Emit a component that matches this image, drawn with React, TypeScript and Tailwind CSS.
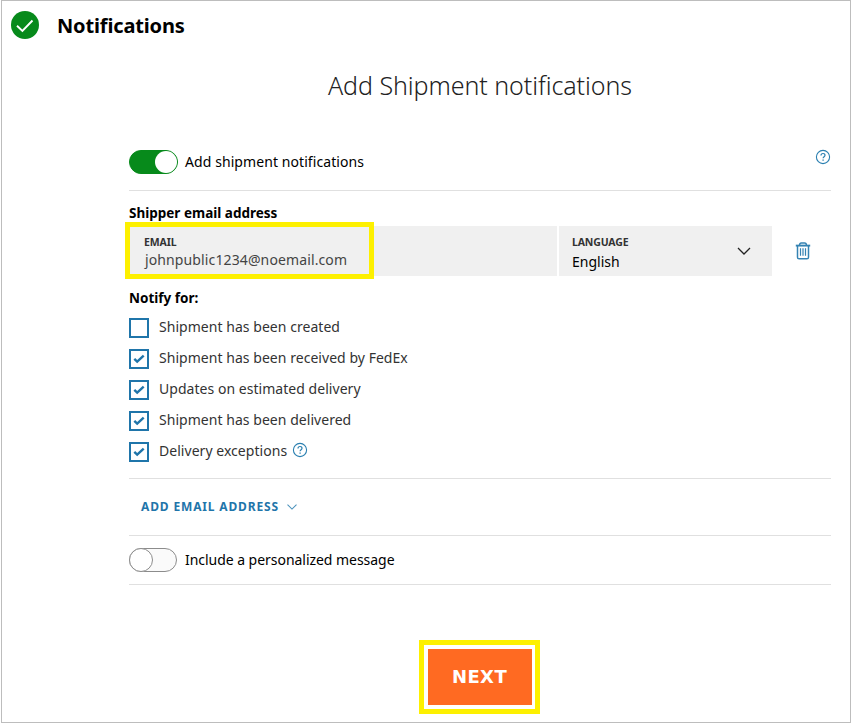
import * as React from "react"
import { clsx } from "clsx"

type NotifyOption = {
  id: string
  label: string
  checked: boolean
  help?: boolean
}

const initialOptions: NotifyOption[] = [
  { id: "created", label: "Shipment has been created", checked: false },
  { id: "received", label: "Shipment has been received by FedEx", checked: true },
  { id: "estimated", label: "Updates on estimated delivery", checked: true },
  { id: "delivered", label: "Shipment has been delivered", checked: true },
  { id: "exceptions", label: "Delivery exceptions", checked: true, help: true },
]

function HelpIcon() {
  return (
    <svg width="16" height="16" viewBox="0 0 16 16" fill="none" stroke="#2a7fb0" className="shrink-0">
      <circle cx="8" cy="8" r="6.6" strokeWidth="1.1" />
      <path d="M6 6.4C6 5.2 6.9 4.5 8 4.5s2 .7 2 1.8c0 1.3-1.9 1.5-1.9 3" strokeWidth="1.2" />
      <path d="M8.1 10.4v1.3" strokeWidth="1.3" />
    </svg>
  )
}

function TrashIcon() {
  return (
    <svg width="16" height="18" viewBox="0 0 16 18" fill="none" stroke="#3583b3" className="shrink-0">
      <path d="M.8 3.6h14.4" strokeWidth="1.9" />
      <path d="M4.6 3.2C4.6 1.6 5.2 1 6.4 1h3.2c1.2 0 1.8.6 1.8 2.2" strokeWidth="1.5" />
      <path d="M2.5 4v11.2c0 1 .6 1.6 1.6 1.6h7.8c1 0 1.6-.6 1.6-1.6V4" strokeWidth="1.5" />
      <path d="M5.5 6.3v7.5M8 6.3v7.5M10.5 6.3v7.5" strokeWidth="1.2" />
    </svg>
  )
}

function Toggle({ on, onClick }: { on: boolean; onClick: () => void }) {
  return (
    <button
      type="button"
      role="switch"
      aria-checked={on}
      onClick={onClick}
      className={clsx(
        "flex h-6 shrink-0 items-center rounded-full border",
        on ? "w-[49px] justify-end border-[#078a1b] bg-[#078a1b]" : "w-12 justify-start border-[#8c8c8c] bg-[#fafafa]"
      )}
    >
      <span className={clsx("rounded-full bg-white", on ? "size-[22px]" : "-ml-px size-6 border border-[#8c8c8c]")} />
    </button>
  )
}

function Checkbox({ option, onChange }: { option: NotifyOption; onChange: () => void }) {
  return (
    <label className="flex h-5 items-center">
      <input type="checkbox" className="sr-only" checked={option.checked} onChange={onChange} />
      <span className="flex size-5 shrink-0 items-center justify-center border-2 border-[#1f75aa] bg-white">
        {option.checked && (
          <svg width="12" height="10" viewBox="0 0 12 10" fill="none" stroke="#1f75aa" strokeWidth="2.4">
            <path d="M1.3 4.8 4.2 7.6 10.7 1.6" />
          </svg>
        )}
      </span>
      <span className="mr-[5px] mb-0.5 ml-2.5 text-sm tracking-[0.04px] whitespace-nowrap text-[#333]">
        {option.label}
      </span>
      {option.help && (
        <span className="mb-1">
          <HelpIcon />
        </span>
      )}
    </label>
  )
}

export default function App() {
  const [enabled, setEnabled] = React.useState(true)
  const [personalized, setPersonalized] = React.useState(false)
  const [options, setOptions] = React.useState(initialOptions)

  const toggleOption = (id: string) => {
    setOptions((prev) => prev.map((o) => (o.id === id ? { ...o, checked: !o.checked } : o)))
  }

  return (
    <div className="h-[724px] w-[853px] bg-white pl-px font-['Noto_Sans','Open_Sans',sans-serif] text-black">
      <div className="h-[723px] w-[850px] border border-[#bdbdbd]">
        <header className="flex h-12 items-center pl-[9px]">
          <svg width="28" height="28" viewBox="0 0 28 28" fill="none">
            <circle cx="14" cy="14" r="14" fill="#078a1b" />
            <path d="M6 14.8 11.4 20 21.5 9.5" stroke="#fff" strokeWidth="1.9" />
          </svg>
          <h1 className="mt-0.5 ml-[18px] text-xl font-bold tracking-[-0.15px]">Notifications</h1>
        </header>

        <main className="ml-[127px] w-[702px]">
          <h2 className="mt-4 h-10 text-center text-[25px] leading-10 font-light tracking-[-0.06px] text-[#222]">
            Add Shipment notifications
          </h2>

          <div className="flex h-[86px] items-end justify-between border-b border-[#e0e0e0] pb-4">
            <div className="flex items-center">
              <Toggle on={enabled} onClick={() => setEnabled(!enabled)} />
              <span className="ml-[7px] text-sm tracking-[0.08px]">Add shipment notifications</span>
            </div>
            <div className="mb-[9px]">
              <HelpIcon />
            </div>
          </div>

          <h3 className="mt-[11px] h-[23px] text-[13.5px] leading-[22px] font-bold">Shipper email address</h3>
          <div className="mt-px flex h-[50px] items-center">
            <div className="flex h-[50px] w-[428px] items-center bg-[#f0f0f0]">
              <div className="-mt-px -ml-1 h-[57px] w-[249px] shrink-0 border-5 border-[#fdf000] pt-[9px] pl-3.5">
                <div className="text-[10.5px] leading-3 font-bold tracking-[-0.1px] text-[#333]">EMAIL</div>
                <div className="pl-px text-sm leading-6 tracking-[0.12px] text-[#444]">johnpublic1234@noemail.com</div>
              </div>
            </div>
            <div className="ml-0.5 flex h-[50px] w-[213px] items-center justify-between bg-[#f0f0f0] pr-[21px] pl-[13px]">
              <div>
                <div className="mt-2.5 text-[10.5px] leading-3 font-bold tracking-[-0.15px] text-[#333]">LANGUAGE</div>
                <div className="text-sm leading-7">English</div>
              </div>
              <svg width="14" height="8" viewBox="0 0 14 8" fill="none" stroke="#222" strokeWidth="1.3">
                <path d="M1 1 7 7l6-6" />
              </svg>
            </div>
            <button type="button" aria-label="Delete" className="ml-[23px]">
              <TrashIcon />
            </button>
          </div>

          <h3 className="mt-[11px] h-[22px] text-[13.5px] leading-[22px] font-bold">Notify for:</h3>
          <div className="mt-[9px] flex h-[161px] flex-col gap-[11px] border-b border-[#e0e0e0]">
            {options.map((option) => (
              <Checkbox key={option.id} option={option} onChange={() => toggleOption(option.id)} />
            ))}
          </div>

          <div className="flex h-[57px] items-center border-b border-[#e0e0e0] pl-3">
            <button type="button" className="flex items-center text-xs font-bold tracking-[0.85px] text-[#1f75aa]">
              ADD EMAIL ADDRESS
              <svg width="10" height="6" viewBox="0 0 10 6" fill="none" stroke="#4d93bd" strokeWidth="1.1" className="ml-2">
                <path d="M.5.7 5 5.1 9.5.7" />
              </svg>
            </button>
          </div>

          <div className="flex h-[49px] items-center border-b border-[#e0e0e0]">
            <Toggle on={personalized} onClick={() => setPersonalized(!personalized)} />
            <span className="ml-2 text-sm tracking-[-0.04px]">Include a personalized message</span>
          </div>
        </main>

        <div className="mt-[55px] ml-[417px] w-[121px] border-5 border-[#fdf000] py-1 pr-[3px] pl-1">
          <button
            type="button"
            className="h-14 w-full bg-[#ff6a22] pr-px font-['DejaVu_Sans','Noto_Sans',sans-serif] text-lg font-bold tracking-[0.4px] text-white"
          >
            NEXT
          </button>
        </div>
      </div>
    </div>
  )
}
